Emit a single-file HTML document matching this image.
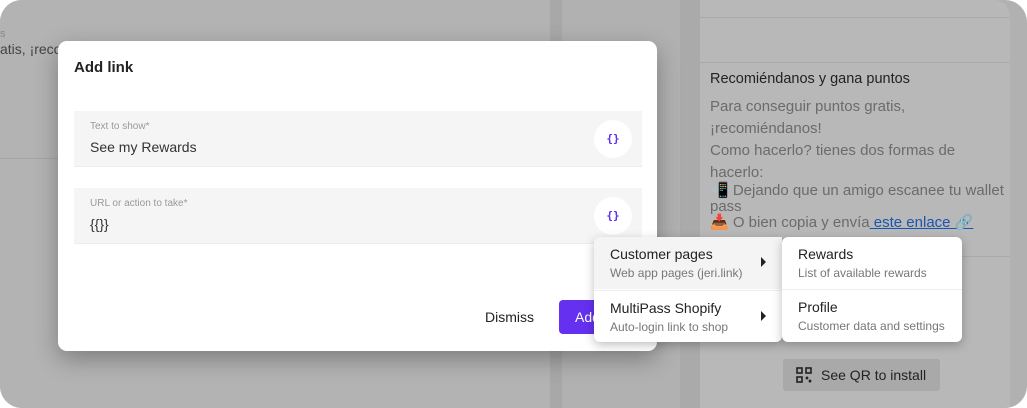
<!DOCTYPE html>
<html><head><meta charset="utf-8"><style>
*{box-sizing:border-box;margin:0;padding:0}
body{width:1027px;height:408px;background:#fff;font-family:"Liberation Sans","Noto Sans CJK JP",sans-serif;position:relative;overflow:hidden}
.outer{position:absolute;left:0;top:0;width:1027px;height:408px;border-radius:22px;background:#b1b1b1;overflow:hidden}
.a{position:absolute}
.modal{left:58px;top:41px;width:599px;height:310px;background:#fff;border-radius:9px;box-shadow:0 8px 24px rgba(0,0,0,.3)}
.field{position:absolute;left:16px;width:568px;height:56px;background:#f5f5f5;border-bottom:1px solid #ececec}
.lbl{position:absolute;left:16px;top:10px;font-size:10px;color:#999}
.val{position:absolute;left:16px;top:28px;font-size:14px;color:#333}
.ic{position:absolute;right:10px;top:9px;width:38px;height:38px;border-radius:50%;background:#fff;color:#5b2ee8;font-size:11px;font-weight:bold;text-align:center;line-height:38px;font-family:"DejaVu Sans Mono",monospace}
.menu{background:#fff;border-radius:6px;box-shadow:0 3px 10px rgba(0,0,0,.25)}
.it{position:absolute;left:0;width:100%;height:52px}
.t{position:absolute;left:16px;top:9px;font-size:14px;color:#222}
.s{position:absolute;left:16px;top:29px;font-size:12px;color:#777}
.ar{position:absolute;right:16px;top:20px;width:0;height:0;border-left:5px solid #222;border-top:5px solid transparent;border-bottom:5px solid transparent}
.rt{font-size:15px;color:#6b6b6b;line-height:22px}
</style></head><body>
<div class="outer">
 <div class="a" style="left:0;top:0;width:550px;height:408px;background:#b3b3b3"></div>
 <div class="a" style="left:550px;top:0;width:12px;height:408px;background:#a8a8a8"></div>
 <div class="a" style="left:680px;top:0;width:20px;height:408px;background:#aaaaaa"></div>
 <div class="a" style="left:700px;top:0;width:310px;height:408px;background:#b8b8b8;border-top-right-radius:16px"></div>
 <div class="a" style="left:700px;top:17px;width:310px;height:1px;background:#aaa"></div>
 <div class="a" style="left:700px;top:62px;width:310px;height:1px;background:#aaa"></div>
 <div class="a" style="left:700px;top:256px;width:310px;height:1px;background:#aaa"></div>
 <div class="a" style="left:0;top:28px;font-size:11px;color:#888">s</div>
 <div class="a" style="left:0;top:41px;font-size:14px;color:#444">atis, ¡recor</div>
 <div class="a" style="left:0;top:158px;width:58px;height:1px;background:#a6a6a6"></div>
 <div class="a" style="left:710px;top:71px;font-size:14.5px;color:#222">Recomiéndanos y gana puntos</div>
 <div class="a rt" style="left:710px;top:96px;width:300px">Para conseguir puntos gratis,<br>¡recomiéndanos!<br>Como hacerlo? tienes dos formas de<br>hacerlo:</div>
 <div class="a rt" style="left:710px;top:183px;width:310px;line-height:16px">📲 Dejando que un amigo escanee tu wallet<br>pass</div>
 <div class="a rt" style="left:710px;top:212px">📥 O bien copia y envía<span style="color:#1a55b0;text-decoration:underline"> este enlace 🔗</span></div>
 <div class="a" style="left:783px;top:359px;width:157px;height:32px;background:#a9a9a9;border-radius:3px;font-size:14px;color:#222;line-height:32px;padding-left:38px">See QR to install</div>
 <svg class="a" style="left:796px;top:367px" width="16" height="16" viewBox="0 0 16 16" fill="none" stroke="#222" stroke-width="1.6"><rect x="1" y="1" width="5" height="5"/><rect x="10" y="1" width="5" height="5"/><rect x="1" y="10" width="5" height="5"/><path d="M10 10l2 2m0-2l-2 2m3 1l2 2m0-2l-2 2"/></svg>

 <div class="a modal">
  <div class="a" style="left:16px;top:18px;font-size:15px;font-weight:bold;color:#222">Add link</div>
  <div class="field" style="top:70px"><div class="lbl">Text to show*</div><div class="val">See my Rewards</div><div class="ic">{}</div></div>
  <div class="field" style="top:147px"><div class="lbl">URL or action to take*</div><div class="val">{{}}</div><div class="ic">{}</div></div>
  <div class="a" style="left:427px;top:268px;font-size:14px;color:#222">Dismiss</div>
  <div class="a" style="left:501px;top:259px;width:80px;height:34px;background:#6530f0;border-radius:4px;color:#fff;font-size:14px;line-height:34px;padding-left:16px">Add</div>
 </div>

 <div class="a menu" style="left:594px;top:237px;width:188px;height:105px">
  <div class="it" style="top:0;background:#f4f4f4;border-radius:6px 0 0 0"><div class="t">Customer pages</div><div class="s">Web app pages (jeri.link)</div><div class="ar"></div></div>
  <div class="it" style="top:53px;border-top:1px solid #eee"><div class="t">MultiPass Shopify</div><div class="s">Auto-login link to shop</div><div class="ar"></div></div>
 </div>
 <div class="a menu" style="left:782px;top:237px;width:180px;height:105px">
  <div class="it" style="top:0"><div class="t">Rewards</div><div class="s">List of available rewards</div></div>
  <div class="it" style="top:52px;border-top:1px solid #eee"><div class="t">Profile</div><div class="s">Customer data and settings</div></div>
 </div>
</div>
</body></html>
